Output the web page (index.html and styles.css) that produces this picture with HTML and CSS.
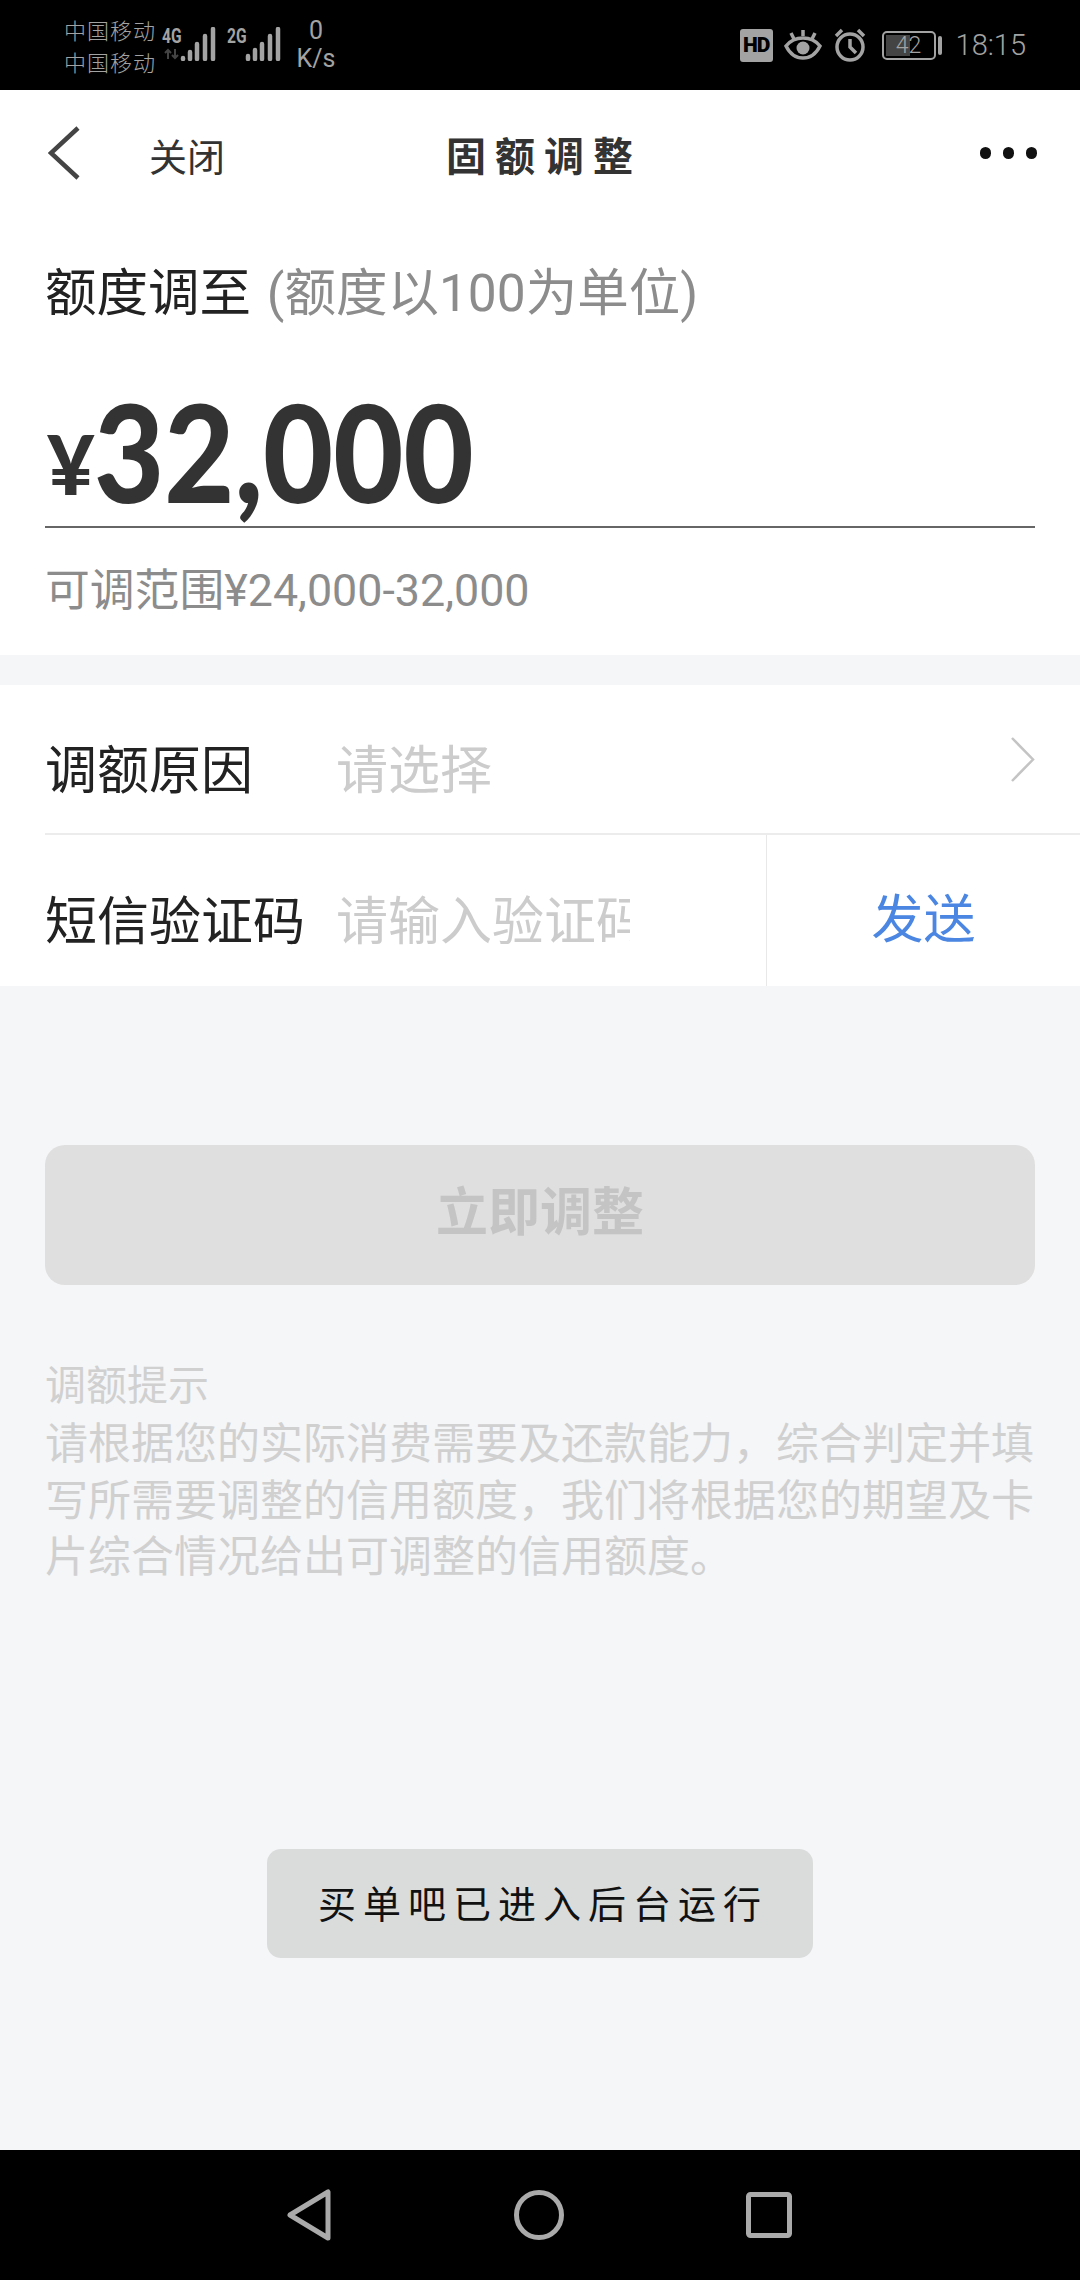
FILE: index.html
```html
<!DOCTYPE html>
<html lang="zh-CN">
<head>
    <meta charset="UTF-8" />
    <title>固额调整</title>
    <link rel="stylesheet" href="styles.css">
</head>
<body>
<div class="page">
    <div class="status-bar">
        <div class="carriers">
            <div>中国移动</div>
            <div>中国移动</div>
        </div>
        <div class="sim sim-first">
            <span class="net">4G</span>
            <svg class="bars" width="36" height="34" viewBox="0 0 36 34">
                <path d="M3 32v-1M10 32v-7M17 32v-15M25 32v-23M33 32v-30" />
            </svg>
            <svg class="updown" width="16" height="12" viewBox="0 0 16 12">
                <path d="M4 11V2M1 5l3-3 3 3M11 1v9M8 7l3 3 3-3" />
            </svg>
        </div>
        <div class="sim sim-second">
            <span class="net">2G</span>
            <svg class="bars" width="36" height="34" viewBox="0 0 36 34">
                <path d="M3 32v-3M10 32v-9M17 32v-15M25 32v-23M33 32v-30" />
            </svg>
        </div>
        <div class="speed">
            <div>0</div>
            <div>K/s</div>
        </div>
        <div class="status-right">
            <span class="hd">HD</span>
            <svg class="eye" width="38" height="32" viewBox="0 0 38 32">
                <path d="M2 17c4-5 10-8 17-8s13 3 17 8c-4 8-10 12-17 12S6 25 2 17z" />
                <circle cx="19" cy="19" r="6.500" />
                <path d="M19 1v6M7 4l3 6M31 4l-3 6" />
            </svg>
            <svg class="alarm" width="34" height="34" viewBox="0 0 34 34">
                <circle cx="17" cy="19" r="13" />
                <path d="M17 11v8l6 6M3 8l6-6M31 8l-6-6" />
            </svg>
            <div class="battery">
                <span class="battery-fill"></span>
                <span class="battery-num">42</span>
            </div>
            <span class="battery-tip"></span>
            <span class="clock">18:15</span>
        </div>
    </div>

    <div class="nav">
        <svg class="back" width="33" height="54" viewBox="0 0 33 54">
            <path d="M30 2L3 27l27 25" />
        </svg>
        <span class="close">关闭</span>
        <span class="nav-title">固额调整</span>
        <div class="more"><i></i><i></i><i></i></div>
    </div>

    <div class="amount-card">
        <div class="amount-head">额度调至 <span class="muted">(额度以100为单位)</span></div>
        <div class="amount-value"><span class="yen">¥</span><span class="digits">32,000</span></div>
        <div class="amount-range">可调范围¥24,000-32,000</div>
    </div>

    <div class="form-card">
        <div class="row row-reason">
            <span class="row-label">调额原因</span>
            <span class="row-holder">请选择</span>
            <svg class="row-arrow" width="25" height="45" viewBox="0 0 25 45">
                <path d="M2 1l21 21.500L2 44" />
            </svg>
        </div>
        <div class="row row-sms">
            <span class="row-label">短信验证码</span>
            <span class="row-holder row-clip">请输入验证码</span>
            <span class="send">发送</span>
        </div>
    </div>

    <div class="content">
        <div class="submit">立即调整</div>
        <div class="tips">
            <div class="tips-title">调额提示</div>
            <p>请根据您的实际消费需要及还款能力&#65292;综合判定并填写所需要调整的信用额度&#65292;我们将根据您的期望及卡片综合情况给出可调整的信用额度。</p>
        </div>
        <div class="toast">买单吧已进入后台运行</div>
    </div>

    <div class="bottom-bar">
        <svg width="44" height="52" viewBox="0 0 44 52">
            <path d="M41 3v46L3 26z" />
        </svg>
        <svg class="home" width="50" height="50" viewBox="0 0 50 50">
            <circle cx="25" cy="25" r="22.500" />
        </svg>
        <svg width="46" height="46" viewBox="0 0 46 46">
            <rect x="2.500" y="2.500" width="41" height="41" rx="2" />
        </svg>
    </div>
</div>
</body>
</html>
```

FILE: styles.css
```css
* {
    box-sizing: border-box;
}
body {
    margin: 0;
    font-family: Roboto, "Noto Sans CJK SC", sans-serif;
    background-color: #f5f6f8;
}
.page {
    width: 1080px;
    height: 2280px;
    display: flex;
    flex-direction: column;
    overflow: hidden;
}

/* status bar */
.status-bar {
    height: 90px;
    flex: none;
    background-color: #000;
    color: #a3a3a3;
    display: flex;
    align-items: center;
    padding-left: 64px;
}
.carriers {
    width: 98px;
    padding-top: 5px;
    font-size: 22px;
    letter-spacing: 1px;
    line-height: 32px;
    font-weight: 300;
}
.sim {
    position: relative;
    width: 54px;
    height: 34px;
}
.sim-second {
    margin-left: 11px;
}
.net {
    position: absolute;
    left: 0;
    top: -3px;
    font-size: 20px;
    font-weight: 700;
    line-height: 22px;
    transform: scaleX(0.78);
    transform-origin: left;
}
.bars {
    position: absolute;
    right: 0;
    top: -1px;
    fill: none;
    stroke: #a3a3a3;
    stroke-width: 4.500;
    stroke-linecap: round;
}
.updown {
    position: absolute;
    left: 2px;
    top: 20px;
    fill: none;
    stroke: #444;
    stroke-width: 2;
}
.speed {
    width: 40px;
    margin-left: 15px;
    font-size: 25px;
    line-height: 28px;
    text-align: center;
}
.status-right {
    margin-left: auto;
    display: flex;
    align-items: center;
    padding-right: 54px;
}
.hd {
    width: 33px;
    height: 33px;
    border-radius: 3px;
    background-color: #a3a3a3;
    color: #000;
    font-size: 21px;
    font-weight: 900;
    letter-spacing: -1px;
    line-height: 33px;
    text-align: center;
}
.eye {
    margin-left: 11px;
    fill: none;
    stroke: #a3a3a3;
    stroke-width: 3.500;
}
.eye circle {
    fill: #a3a3a3;
    stroke: none;
}
.alarm {
    margin-left: 11px;
    fill: none;
    stroke: #a3a3a3;
    stroke-width: 3.500;
}
.battery {
    position: relative;
    width: 54px;
    height: 29px;
    margin-left: 15px;
    border: 2px solid #a3a3a3;
    border-radius: 5px;
    font-size: 23px;
    font-weight: 300;
    line-height: 25px;
    text-align: center;
}
.battery-fill {
    position: absolute;
    left: 2px;
    top: 2px;
    bottom: 2px;
    width: 24px;
    background-color: #444;
}
.battery-num {
    position: relative;
}
.battery-tip {
    width: 4px;
    height: 19px;
    margin-left: 2px;
    border-radius: 2px;
    background-color: #a3a3a3;
}
.clock {
    margin-left: 14px;
    font-size: 29px;
    font-weight: 300;
    line-height: 32px;
}

/* nav */
.nav {
    height: 134px;
    flex: none;
    background-color: #fff;
    position: relative;
    display: flex;
    align-items: center;
    padding: 0 43px 0 48px;
}
.back {
    fill: none;
    stroke: #444;
    stroke-width: 4.500;
    margin-top: -8px;
}
.close {
    margin-left: 68px;
    margin-top: -6px;
    font-size: 38px;
    color: #333;
}
.nav-title {
    position: absolute;
    left: 0;
    right: 0;
    margin-top: -6px;
    padding-left: 8px;
    text-align: center;
    font-size: 40px;
    font-weight: 700;
    letter-spacing: 9px;
    color: #333;
}
.more {
    margin-left: auto;
    display: flex;
    gap: 11.500px;
    margin-top: -8px;
}
.more i {
    width: 11.500px;
    height: 11.500px;
    border-radius: 50%;
    background-color: #111;
}

/* amount */
.amount-card {
    flex: none;
    background-color: #fff;
    padding: 40px 45px 34px;
}
.amount-head {
    font-size: 51.500px;
    line-height: 60px;
    color: #222;
}
.muted {
    margin-left: 3px;
    color: #8c8c8c;
    font-size: 51.500px;
}
.amount-value {
    height: 204px;
    border-bottom: 2px solid #666;
    display: flex;
    align-items: baseline;
    color: #333;
    font-family: Lato, sans-serif;
    font-weight: 900;
    line-height: 254px;
}
.yen {
    font-size: 82px;
    margin-left: 2px;
    transform: translateY(-8px);
}
.digits {
    font-size: 136px;
    margin-left: -1px;
    transform: scaleX(0.89);
    transform-origin: left;
}
.amount-range {
    margin-top: 33px;
    font-size: 44.800px;
    line-height: 60px;
    color: #8c8c8c;
}

/* form */
.form-card {
    flex: none;
    margin-top: 30px;
    background-color: #fff;
}
.row {
    height: 150px;
    display: flex;
    align-items: center;
    margin-left: 45px;
}
.row-reason {
    border-bottom: 2px solid #ececec;
}
.row-sms {
    height: 151px;
}
.row-label {
    width: 291px;
    flex: none;
    margin-top: 14px;
    font-size: 52px;
    color: #222;
}
.row-holder {
    margin-top: 14px;
    font-size: 52px;
    color: #ccc;
}
.row-clip {
    width: 294px;
    overflow: hidden;
    white-space: nowrap;
}
.row-arrow {
    margin-left: auto;
    margin-right: 45px;
    fill: none;
    stroke: #c4c4c4;
    stroke-width: 2.500;
}
.send {
    margin-left: auto;
    width: 314px;
    height: 100%;
    border-left: 1px solid #e8e8e8;
    font-size: 52px;
    line-height: 172px;
    text-align: center;
    color: #4a86e2;
}

/* lower part */
.content {
    flex: 1;
    position: relative;
    padding: 159px 45px 0;
}
.submit {
    height: 140px;
    border-radius: 20px;
    background-color: #dfdfdf;
    color: #c4c4c4;
    font-size: 52px;
    font-weight: 700;
    line-height: 138px;
    text-align: center;
}
.tips {
    margin-top: 73px;
    color: #d0d0d0;
}
.tips-title {
    font-size: 41px;
    line-height: 56px;
}
.tips p {
    margin: 2px 0 0;
    font-size: 43px;
    line-height: 56.500px;
}
.toast {
    position: absolute;
    left: 267px;
    top: 863px;
    width: 546px;
    height: 109px;
    padding-left: 6px;
    border-radius: 14px;
    background-color: #dadcdc;
    color: #111;
    font-size: 38px;
    letter-spacing: 7px;
    line-height: 112px;
    text-align: center;
}

/* bottom bar */
.bottom-bar {
    height: 130px;
    flex: none;
    background-color: #000;
    display: flex;
    align-items: center;
    padding: 0 288px 0 287px;
    justify-content: space-between;
}
.bottom-bar svg {
    fill: none;
    stroke: #aaa;
    stroke-width: 5;
    stroke-linejoin: round;
}
.bottom-bar .home {
    margin-left: 1px;
}
```
